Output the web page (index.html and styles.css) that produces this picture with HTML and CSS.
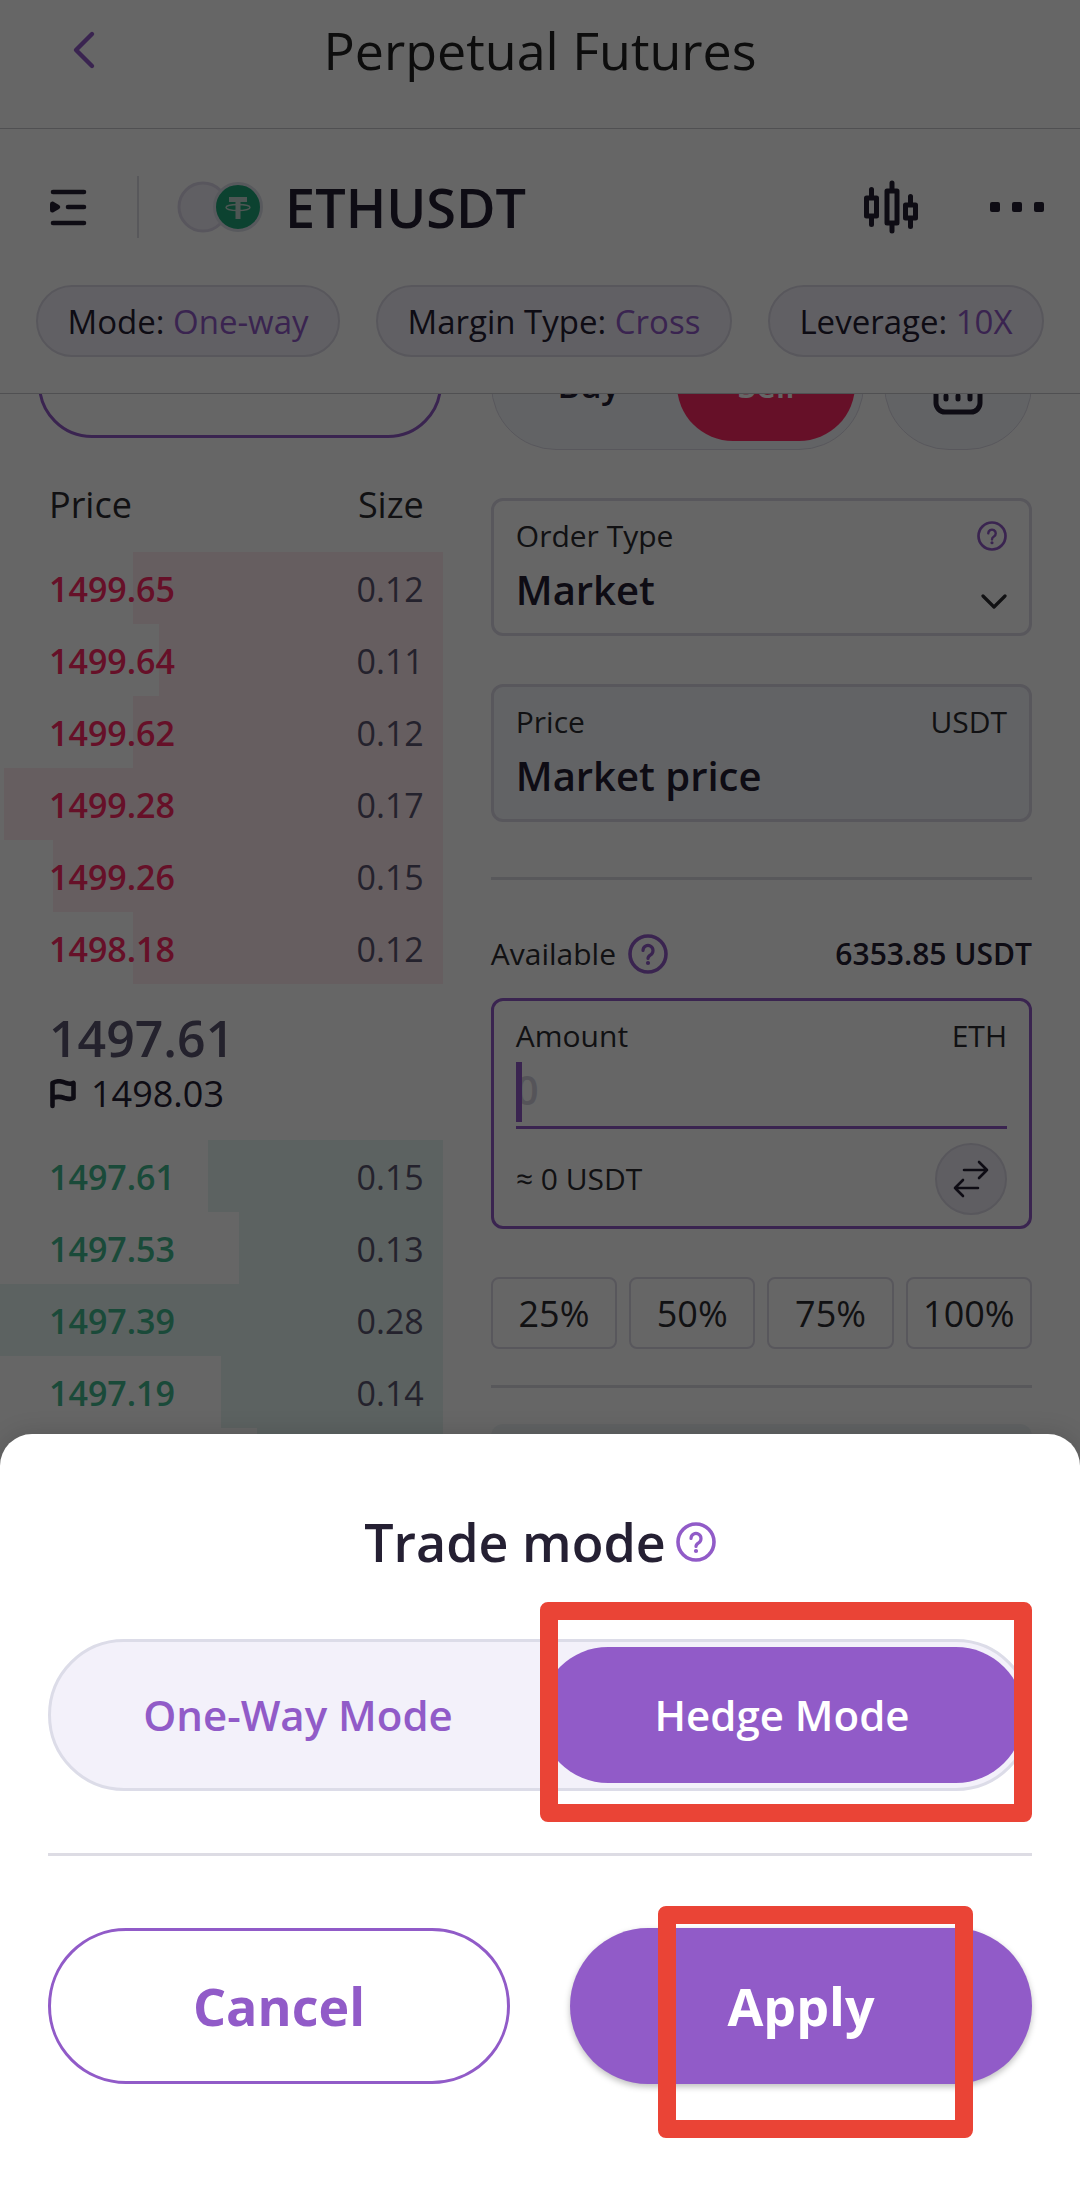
FILE: index.html
```
<!DOCTYPE html>
<html lang="en">
<head>
  <meta charset="UTF-8">
  <meta name="viewport" content="width=device-width, initial-scale=1.0">
  <title>Perpetual Futures</title>
  <link rel="stylesheet" href="styles.css">
</head>
<body>
  <!-- shared icons -->
  <svg class="sprite" aria-hidden="true">
    <symbol id="icon-help" viewBox="0 0 40 40">
      <circle cx="20" cy="20" r="18" fill="none" stroke="currentColor" stroke-width="3.6"/>
      <path d="M15 16.5a5 5 0 1 1 7.6 4.3c-1.8 1.1-2.6 1.9-2.6 3.7" fill="none" stroke="currentColor" stroke-width="3.2" stroke-linecap="round"/>
      <circle cx="20" cy="29" r="2.1" fill="currentColor"/>
    </symbol>
  </svg>

  <div class="app">
    <header class="titlebar">
      <button class="icon-button back" aria-label="Back">
        <svg width="26" height="40" viewBox="0 0 26 40"><path d="M20 4L4 20l16 16" fill="none" stroke="currentColor" stroke-width="4.4" stroke-linecap="round" stroke-linejoin="round"/></svg>
      </button>
      <h1>Perpetual Futures</h1>
    </header>

    <section class="market">
      <div class="market-row">
        <button class="icon-button" aria-label="Markets">
          <svg width="40" height="40" viewBox="0 0 40 40">
            <path d="M5 5h31M20 20h16M5 36h31" fill="none" stroke="currentColor" stroke-width="4.6" stroke-linecap="round"/>
            <path d="M2 17q0-3 3-2.500l6 3.500q2.500 2 0 4l-6 3.500q-3 .5-3-2.500z" fill="currentColor"/>
          </svg>
        </button>
        <span class="separator"></span>
        <svg class="coins" width="88" height="52" viewBox="0 0 88 52" aria-hidden="true">
          <circle cx="26" cy="26" r="24" fill="#f0edf7" stroke="#dcd7e8" stroke-width="3"/>
          <circle cx="61" cy="26" r="23.5" fill="#1fa678" stroke="#dcdfe8" stroke-width="3"/>
          <path d="M52 16h18v5h-6.500v17h-5V21H52z" fill="#c4d8d2"/>
          <ellipse cx="61" cy="26.5" rx="12" ry="3" fill="none" stroke="#c4d8d2" stroke-width="1.4"/>
        </svg>
        <h2>ETHUSDT</h2>
        <div class="market-actions">
          <button class="icon-button" aria-label="Chart">
            <svg width="54" height="54" viewBox="0 0 54 54" fill="none" stroke="currentColor" stroke-width="5" stroke-linecap="round" stroke-linejoin="round">
              <path d="M2.500 18h10v18h-10zM7.500 18V9.500M7.500 36v8.500M23 11h10v32H23zM28 11V3M28 43v8M41.500 25h10v13h-10zM46.500 25v-8.500M46.500 38v8.500"/>
            </svg>
          </button>
          <button class="icon-button" aria-label="More">
            <svg width="54" height="10" viewBox="0 0 54 10" fill="currentColor">
              <rect width="10" height="10" rx="2"/><rect x="22" width="10" height="10" rx="2"/><rect x="44" width="10" height="10" rx="2"/>
            </svg>
          </button>
        </div>
      </div>
      <div class="chips">
        <button class="chip">Mode: <span>One-way</span></button>
        <button class="chip">Margin Type: <span>Cross</span></button>
        <button class="chip">Leverage: <span>10X</span></button>
      </div>
    </section>

    <main>
      <section class="book">
        <button class="outline-button" aria-label="Book view"></button>
        <table class="asks">
          <thead>
            <tr><th>Price</th><th>Size</th></tr>
          </thead>
          <tbody>
            <tr style="--depth: 70%"><td>1499.65</td><td>0.12</td></tr>
            <tr style="--depth: 64%"><td>1499.64</td><td>0.11</td></tr>
            <tr style="--depth: 70%"><td>1499.62</td><td>0.12</td></tr>
            <tr style="--depth: 99%"><td>1499.28</td><td>0.17</td></tr>
            <tr style="--depth: 88%"><td>1499.26</td><td>0.15</td></tr>
            <tr style="--depth: 70%"><td>1498.18</td><td>0.12</td></tr>
          </tbody>
        </table>
        <div class="last-price">
          <strong>1497.61</strong>
          <span class="mark-price">
            <svg width="28" height="30" viewBox="0 0 28 30" fill="none" stroke="currentColor" stroke-width="4.6" stroke-linecap="round" stroke-linejoin="round"><path d="M3.500 27V4C9 1 14 2.500 17 4c3 1 5 1 7.500 0v15c-3 1.500-6 1-9 0-4-1.500-8-1.500-12 0"/></svg>
            1498.03
          </span>
        </div>
        <table class="bids">
          <tbody>
            <tr style="--depth: 53%"><td>1497.61</td><td>0.15</td></tr>
            <tr style="--depth: 46%"><td>1497.53</td><td>0.13</td></tr>
            <tr style="--depth: 100%"><td>1497.39</td><td>0.28</td></tr>
            <tr style="--depth: 50%"><td>1497.19</td><td>0.14</td></tr>
            <tr style="--depth: 42%"><td></td><td></td></tr>
          </tbody>
        </table>
      </section>

      <form class="order">
        <div class="side-row">
          <div class="side-switch">
            <button type="button">Buy</button>
            <button type="button" class="active">Sell</button>
          </div>
          <button type="button" class="calculator" aria-label="Calculator">
            <svg width="50" height="60" viewBox="0 0 50 60" fill="none" stroke="currentColor" stroke-width="5" stroke-linecap="round">
              <rect x="3" y="3" width="44" height="54" rx="9"/>
              <path d="M13 18h24M13 41v3M25 41v3M37 31v13"/>
            </svg>
          </button>
        </div>

        <div class="field">
          <div class="field-top">
            <label for="orderType">Order Type</label>
            <svg class="help small"><use href="#icon-help"/></svg>
          </div>
          <div class="select-wrap">
            <select id="orderType"><option>Market</option></select>
            <svg width="26" height="16" viewBox="0 0 26 16"><path d="M2 2l11 11L24 2" fill="none" stroke="currentColor" stroke-width="3.2" stroke-linecap="round" stroke-linejoin="round"/></svg>
          </div>
        </div>

        <div class="field disabled">
          <div class="field-top">
            <label for="price">Price</label>
            <span>USDT</span>
          </div>
          <input id="price" type="text" value="Market price" readonly>
        </div>

        <hr>

        <div class="available">
          <span>Available</span>
          <svg class="help"><use href="#icon-help"/></svg>
          <strong>6353.85 USDT</strong>
        </div>

        <div class="field focused">
          <div class="field-top">
            <label for="amount">Amount</label>
            <span>ETH</span>
          </div>
          <div class="amount-input">
            <span class="caret"></span>
            <input id="amount" type="text" placeholder="0">
          </div>
          <div class="amount-bottom">
            <span>≈ 0 USDT</span>
            <button type="button" class="swap" aria-label="Swap currency">
              <svg width="36" height="38" viewBox="0 0 36 38" fill="none" stroke="currentColor" stroke-width="2.6" stroke-linecap="round" stroke-linejoin="round"><path d="M11 10h23M26 2l8 8-8 8M25 28H2M10 20l-8 8 8 8"/></svg>
            </button>
          </div>
        </div>

        <div class="percents">
          <button type="button">25%</button>
          <button type="button">50%</button>
          <button type="button">75%</button>
          <button type="button">100%</button>
        </div>

        <hr>
        <div class="next-block"></div>
      </form>
    </main>
  </div>

  <div class="overlay"></div>

  <section class="sheet" role="dialog" aria-labelledby="sheetTitle">
    <div class="sheet-title">
      <h2 id="sheetTitle">Trade mode</h2>
      <svg class="help"><use href="#icon-help"/></svg>
    </div>
    <div class="mode-switch">
      <button aria-pressed="false">One-Way Mode</button>
      <button class="active" aria-pressed="true">Hedge Mode</button>
      <span class="marker marker-mode"></span>
    </div>
    <hr>
    <div class="sheet-actions">
      <button class="cancel">Cancel</button>
      <div class="apply-wrap">
        <button class="apply">Apply</button>
        <span class="marker marker-apply"></span>
      </div>
    </div>
  </section>
</body>
</html>
```
FILE: styles.css
```
:root {
  --purple: #915bc8;
  --ink: #252033;
  --text: #2c2c30;
  --muted: #5b5570;
  --border: #dcd9e6;
  --soft: #f3f1fa;
  --red: #ff2864;
  --green: #41b890;
  --marker: #ea4436;
}

* {
  box-sizing: border-box;
}

body {
  margin: 0;
  background: #ffffff;
  color: var(--text);
  font-family: "Open Sans", "Noto Sans", sans-serif;
  font-size: 30px;
  line-height: 40px;
}

button,
input,
select {
  margin: 0;
  padding: 0;
  border: none;
  background: none;
  color: inherit;
  font: inherit;
}

button {
  cursor: pointer;
}

svg {
  display: block;
  flex: none;
}

h1,
h2 {
  margin: 0;
  font-size: 52px;
  line-height: 60px;
}

hr {
  height: 3px;
  margin: 0;
  border: none;
  background: #dddce4;
}

.sprite {
  position: absolute;
  width: 0;
  height: 0;
}

.app {
  height: 100vh;
  overflow: hidden;
}

.icon-button {
  display: flex;
  align-items: center;
  color: var(--ink);
}

.help {
  width: 40px;
  height: 40px;
  color: var(--purple);
}

.help.small {
  width: 30px;
  height: 30px;
}

/* top bar */
.titlebar {
  display: grid;
  grid-template-columns: 1fr auto 1fr;
  align-items: center;
  padding: 20px 72px 48px;
  border-bottom: 1px solid #c8c8cc;
}

.titlebar h1 {
  font-weight: 400;
  color: #222222;
}

.back {
  color: var(--purple);
}

/* market header */
.market {
  padding: 47px 36px 36px;
  border-bottom: 1px solid #c8c8cc;
}

.market-row {
  display: flex;
  align-items: center;
  height: 62px;
  padding-left: 12px;
  margin-bottom: 47px;
}

.separator {
  width: 2px;
  height: 62px;
  margin: 0 38px 0 49px;
  background: #dddce4;
}

.coins {
  margin-right: 20px;
}

.market-row h2 {
  font-size: 54px;
  font-weight: 600;
  color: var(--ink);
}

.market-actions {
  display: flex;
  align-items: center;
  gap: 72px;
  margin-left: auto;
}

.chips {
  display: flex;
  gap: 36px;
}

.chip {
  flex: 1 1 auto;
  height: 72px;
  padding-top: 2px;
  border: 2px solid var(--border);
  border-radius: 36px;
  background: var(--soft);
  font-size: 33px;
  white-space: nowrap;
  color: var(--ink);
}

.chip span {
  color: var(--purple);
}

main {
  display: flex;
  overflow: hidden;
}

/* order book */
.book {
  flex: 0 0 41%;
  margin-top: -64px;
}

.outline-button {
  display: block;
  width: 404px;
  height: 108px;
  margin: 0 0 18px 38px;
  border: 3px solid var(--purple);
  border-radius: 54px;
}

table {
  width: 100%;
  border-collapse: collapse;
}

th {
  height: 96px;
  font-size: 36px;
  font-weight: 400;
}

td {
  height: 72px;
  font-size: 34px;
}

th,
td {
  padding: 2px 19px 0 49px;
  text-align: left;
}

th:last-child,
td:last-child {
  text-align: right;
}

td:first-child {
  font-weight: 600;
}

td:last-child {
  color: var(--muted);
}

.asks td:first-child {
  color: var(--red);
}

.bids td:first-child {
  color: var(--green);
}

.asks tbody tr {
  background: linear-gradient(#ffebf0, #ffebf0) right / var(--depth) 100% no-repeat;
}

.bids tr {
  background: linear-gradient(#e6f5f2, #e6f5f2) right / var(--depth) 100% no-repeat;
}

.last-price {
  display: flex;
  flex-direction: column;
  gap: 2px;
  padding: 24px 0 22px 49px;
}

.last-price strong {
  font-size: 50px;
  font-weight: 600;
  line-height: 60px;
  color: var(--muted);
}

.mark-price {
  display: flex;
  align-items: center;
  gap: 14px;
  font-size: 36px;
  line-height: 48px;
  color: var(--ink);
}

/* order form */
.order {
  flex: 1;
  margin: -74px 48px 0;
}

.side-row {
  display: flex;
  gap: 20px;
  height: 130px;
  margin-bottom: 48px;
}

.side-switch {
  display: flex;
  flex: 1;
  padding: 8px;
  border: 1px solid var(--border);
  border-radius: 65px;
  background: #f4f8fc;
}

.side-switch button {
  flex: 1;
  border-radius: 56px;
  font-size: 34px;
  font-weight: 600;
  color: var(--ink);
}

.side-switch .active {
  background: var(--red);
  color: #ffffff;
}

.calculator {
  display: flex;
  align-items: center;
  justify-content: center;
  width: 148px;
  border: 1px solid var(--border);
  border-radius: 65px;
  background: #f4f8fc;
  color: var(--ink);
}

.field {
  margin-bottom: 48px;
  padding: 15px 22px;
  border: 3px solid var(--border);
  border-radius: 12px;
}

.field-top {
  display: flex;
  align-items: center;
  justify-content: space-between;
  height: 40px;
  margin-bottom: 6px;
}

.field input,
.field select {
  display: block;
  width: 100%;
  height: 56px;
  font-size: 40px;
  font-weight: 600;
  line-height: 56px;
  color: var(--ink);
  outline: none;
  appearance: none;
}

.select-wrap {
  display: flex;
  align-items: flex-end;
}

.select-wrap svg {
  margin-bottom: 8px;
}

.disabled {
  margin-bottom: 55px;
  background: #f6f8fc;
}

.available {
  display: flex;
  align-items: center;
  gap: 12px;
  margin: 54px 0 24px;
}

.available strong {
  margin-left: auto;
  font-weight: 600;
  color: var(--ink);
}

.focused {
  padding-bottom: 11px;
  border-color: var(--purple);
}

.amount-input {
  position: relative;
  border-bottom: 3px solid var(--purple);
  padding-bottom: 8px;
}

.amount-input input::placeholder {
  color: #d5d2de;
  opacity: 1;
}

.caret {
  position: absolute;
  top: 0;
  left: 0;
  width: 6px;
  height: 60px;
  background: var(--purple);
}

.amount-bottom {
  display: flex;
  align-items: center;
  justify-content: space-between;
  margin-top: 14px;
}

.swap {
  display: flex;
  align-items: center;
  justify-content: center;
  width: 72px;
  height: 72px;
  border: 2px solid var(--border);
  border-radius: 50%;
  background: #eeebf6;
  color: var(--ink);
}

.percents {
  display: grid;
  grid-template-columns: repeat(4, 1fr);
  gap: 12px;
  margin-bottom: 36px;
}

.percents button {
  height: 72px;
  padding-top: 2px;
  border: 2px solid var(--border);
  border-radius: 8px;
  font-size: 36px;
}

.next-block {
  height: 120px;
  margin-top: 36px;
  border-radius: 12px;
  background: #f0f6f8;
}

/* bottom sheet */
.overlay {
  position: fixed;
  inset: 0;
  background: rgba(0, 0, 0, 0.6);
}

.sheet {
  position: fixed;
  right: 0;
  bottom: 0;
  left: 0;
  padding: 78px 48px 120px;
  border-radius: 32px 32px 0 0;
  background: #ffffff;
  box-shadow: 0 0 24px rgba(0, 0, 0, 0.15);
}

.sheet-title {
  display: flex;
  align-items: center;
  justify-content: center;
  gap: 10px;
  margin-bottom: 67px;
}

.sheet-title h2 {
  font-weight: 600;
  color: var(--ink);
}

.mode-switch {
  position: relative;
  display: flex;
  height: 152px;
  margin-bottom: 62px;
  padding: 5px;
  border: 3px solid #dcdce8;
  border-radius: 76px;
  background: var(--soft);
}

.mode-switch button {
  flex: 1;
  border-radius: 70px;
  font-size: 42px;
  font-weight: 600;
  color: var(--purple);
}

.mode-switch .active {
  background: var(--purple);
  color: #ffffff;
}

.sheet-actions {
  display: grid;
  grid-template-columns: 1fr 1fr;
  gap: 60px;
  margin-top: 72px;
}

.cancel,
.apply-wrap {
  height: 156px;
}

.cancel,
.apply {
  border-radius: 78px;
  font-size: 52px;
  font-weight: 700;
}

.cancel {
  border: 3px solid var(--purple);
  color: var(--purple);
}

.apply-wrap {
  position: relative;
}

.apply {
  width: 100%;
  height: 100%;
  background: var(--purple);
  box-shadow: 0 3px 6px rgba(0, 0, 0, 0.25);
  color: #ffffff;
}

/* red highlight frames */
.marker {
  position: absolute;
  border: 18px solid var(--marker);
  border-radius: 8px;
  pointer-events: none;
}

.marker-mode {
  top: -40px;
  right: -3px;
  bottom: -34px;
  left: 50%;
}

.marker-apply {
  top: -22px;
  right: 59px;
  bottom: -54px;
  left: 88px;
}
```
